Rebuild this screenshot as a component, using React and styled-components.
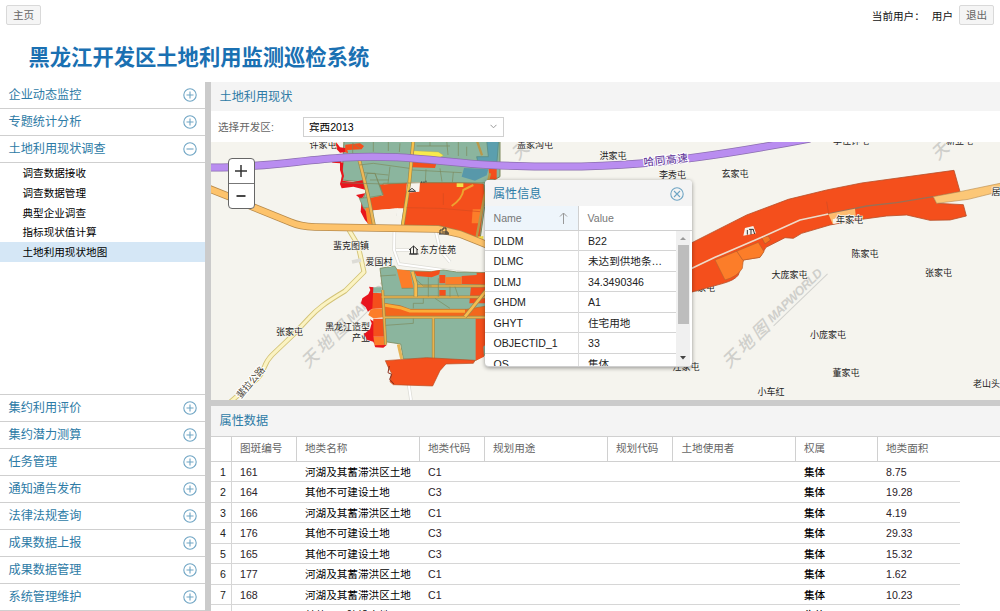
import React from "react";
import styled, { createGlobalStyle } from "styled-components";

const GlobalStyle = createGlobalStyle`
  * { box-sizing: border-box; }
  html, body { margin: 0; padding: 0; overflow: hidden; }
  body {
    background: #fff;
    color: #111;
    font-family: "Liberation Sans", "Noto Sans CJK SC", sans-serif;
    font-size: 10.6px;
  }
`;

const Page = styled.div`
  width: 1000px;
  height: 611px;
  display: flex;
  flex-direction: column;
  overflow: hidden;
`;
const TopBar = styled.div`
  height: 30px;
  flex: none;
  padding: 0 6px;
  display: flex;
  align-items: center;
  justify-content: space-between;
`;
const ToolButton = styled.button`
  width: 35px;
  height: 20px;
  padding: 0;
  border: 1px solid #d9d9d9;
  border-radius: 2px;
  background: #f5f5f5;
  color: #666;
  font: inherit;
  line-height: 18px;
`;
const UserArea = styled.div`
  display: flex;
  align-items: center;
  white-space: pre;
`;
const UserName = styled.span`
  margin: 0 6px 0 7px;
`;
const Title = styled.h1`
  flex: none;
  height: 52px;
  margin: 0;
  padding: 0 0 0 28.5px;
  color: #1a70b2;
  font-size: 21.3px;
  font-weight: 700;
  line-height: 57px;
`;
const Body = styled.div`
  flex: 1;
  min-height: 0;
  display: flex;
`;
const Sidebar = styled.nav`
  width: 205px;
  flex: none;
  display: flex;
  flex-direction: column;
`;
const Section = styled.div`
  height: 27px;
  flex: none;
  padding: 0 8px 0 8.5px;
  border-bottom: 1px solid #cfcfcf;
  display: flex;
  align-items: center;
  justify-content: space-between;
  color: #2d7ba6;
  font-size: 12.15px;
  line-height: 18px;
`;
const CircleIcon = styled.svg`
  width: 14px;
  height: 14px;
  display: block;
  fill: none;
  stroke: #6fa5c4;
  stroke-width: 1.1;
`;
const Menu = styled.div`
  height: 232px;
  flex: none;
  border-bottom: 1px solid #cfcfcf;
`;
const MenuItem = styled.div`
  height: 19.8px;
  padding-left: 22.5px;
  line-height: 20.5px;
  color: #000;
  background: ${(p) => (p.$active ? "#d5e7f6" : "transparent")};
`;
const Splitter = styled.div`
  flex: none;
  background: #cbcbcb;
  ${(p) => (p.$vertical ? "width: 6px;" : "height: 6px;")}
`;
const Content = styled.main`
  flex: 1;
  min-width: 0;
  display: flex;
  flex-direction: column;
`;
const PanelTitle = styled.div`
  height: ${(p) => p.$h}px;
  flex: none;
  padding-left: 8.5px;
  background: #f4f4f4;
  color: #2d7ba6;
  font-size: 12.15px;
  line-height: ${(p) => p.$h + 1}px;
`;
const FilterBar = styled.div`
  height: 31px;
  flex: none;
  padding-left: 7px;
  display: flex;
  align-items: center;
`;
const FilterLabel = styled.label`
  width: 85px;
  color: #666;
`;
const Select = styled.div`
  width: 201px;
  height: 20px;
  padding: 0 6px 0 5px;
  border: 1px solid #d0d0d0;
  display: flex;
  align-items: center;
  justify-content: space-between;
  color: #000;
`;
const MapArea = styled.section`
  position: relative;
  height: 258px;
  flex: none;
  overflow: hidden;
  background: #f5f4ee;
`;
const MapSvg = styled.svg`
  display: block;
  width: 789px;
  height: 258px;
`;
const ZoomControl = styled.div`
  position: absolute;
  left: 16.5px;
  top: 16px;
  width: 27px;
  height: 51px;
  border: 1px solid #666;
  border-radius: 4px;
  background: #fff;
  display: flex;
  flex-direction: column;
`;
const ZoomButton = styled.div`
  flex: 1;
  display: flex;
  align-items: center;
  justify-content: center;
  & + & { border-top: 1px solid #777; }
`;
const Popup = styled.div`
  position: absolute;
  left: 274px;
  top: 38px;
  width: 207px;
  height: 187px;
  border-radius: 4px;
  border-bottom: 1px solid #cfcfcf;
  background: #fff;
  box-shadow: 0 1px 4px rgba(0, 0, 0, 0.4);
  overflow: hidden;
  display: flex;
  flex-direction: column;
`;
const PopupTitle = styled.div`
  height: 26px;
  flex: none;
  padding: 1px 8.5px 0 8px;
  background: #f4f4f4;
  display: flex;
  align-items: center;
  justify-content: space-between;
  color: #2d7ba6;
  font-size: 12.1px;
  line-height: 18px;
`;
const PopupHead = styled.div`
  height: 25px;
  flex: none;
  display: grid;
  grid-template-columns: 94px 1fr;
  border-bottom: 1px solid #d0d0d0;
  color: #777;
  line-height: 24px;
`;
const PopupHeadCell = styled.div`
  padding: 0 10px 0 8.5px;
  display: flex;
  align-items: center;
  justify-content: space-between;
  background: ${(p) => (p.$sorted ? "#eef5fb" : "#fff")};
  border-right: ${(p) => (p.$sorted ? "1px solid #d0d0d0" : "0")};
`;
const PopupBody = styled.div`
  flex: 1;
  min-height: 0;
  display: flex;
  overflow: hidden;
`;
const PropertyList = styled.div`
  width: 191px;
`;
const PropertyRow = styled.div`
  height: 20.43px;
  display: grid;
  grid-template-columns: 94px 1fr;
  border-bottom: 1px solid #d4d4d4;
  line-height: 21px;
  color: #222;
`;
const PropertyCell = styled.div`
  padding-left: 8.5px;
  white-space: nowrap;
  & + & { border-left: 1px solid #dcdcdc; margin-left: -1px; padding-left: 9px; }
`;
const ScrollTrack = styled.div`
  width: 14px;
  background: #f0f0f0;
  display: flex;
  flex-direction: column;
  align-items: center;
  justify-content: space-between;
`;
const ScrollThumb = styled.div`
  width: 11px;
  height: 79px;
  margin-bottom: auto;
  background: #bdbdbd;
`;
const ScrollArrow = styled.svg`
  width: 14px;
  height: 14px;
  flex: none;
  display: block;
`;
const Table = styled.div`
  flex: 1;
  min-height: 0;
  overflow: hidden;
`;
const columns = "20.5px 65px 123px 65px 123px 65.5px 122.5px 82px 1fr";
const HeadRow = styled.div`
  height: 26px;
  display: grid;
  grid-template-columns: ${columns};
  border-top: 1px solid #d0d0d0;
  border-bottom: 1px solid #d0d0d0;
  color: #666;
  line-height: 23.5px;
`;
const HeadCell = styled.div`
  padding-left: 8.5px;
  border-right: ${(p) => (p.$last ? "0" : "1px solid #d0d0d0")};
`;
const DataRow = styled.div`
  width: 749px;
  height: 20.43px;
  display: grid;
  grid-template-columns: ${columns};
  border-bottom: 1px solid #d6d6d6;
  line-height: 20px;
  color: #222;
`;
const DataCell = styled.div`
  padding-left: 8.5px;
  white-space: nowrap;
  color: ${(p) => (p.$cjk ? "#000" : "#2b2229")};
  font-weight: ${(p) => (p.$strong ? 500 : 400)};
`;
const RowNumber = styled.div`
  padding-right: 4.5px;
  border-right: 1px solid #d6d6d6;
  text-align: right;
`;

function Toggle({ open, close }) {
  return (
    <CircleIcon viewBox="0 0 14 14">
      <circle cx="7" cy="7" r="6.2" />
      {close ? <path d="M4 4l6 6M10 4l-6 6" /> : <path d={open ? "M3.5 7h7" : "M3.5 7h7M7 3.5v7"} />}
    </CircleIcon>
  );
}

const sectionsTop = ["企业动态监控", "专题统计分析", "土地利用现状调查"];
const menu = ["调查数据接收", "调查数据管理", "典型企业调查", "指标现状值计算", "土地利用现状地图"];
const sectionsBottom = [
  "集约利用评价", "集约潜力测算", "任务管理", "通知通告发布",
  "法律法规查询", "成果数据上报", "成果数据管理", "系统管理维护",
];
const heads = ["", "图斑编号", "地类名称", "地类代码", "规划用途", "规划代码", "土地使用者", "权属", "地类面积"];
const river = "河湖及其蓄滞洪区土地";
const other = "其他不可建设土地";
const rows = [
  ["161", river, "C1", "8.75"],
  ["164", other, "C3", "19.28"],
  ["166", river, "C1", "4.19"],
  ["176", other, "C3", "29.33"],
  ["165", other, "C3", "15.32"],
  ["177", river, "C1", "1.62"],
  ["168", river, "C1", "10.23"],
  ["", other, "", ""],
];
const properties = [
  ["DLDM", "B22"], ["DLMC", "未达到供地条…"], ["DLMJ", "34.3490346"], ["GHDM", "A1"],
  ["GHYT", "住宅用地"], ["OBJECTID_1", "33"], ["QS", "集体"],
];

// Village labels: text, left edge, vertical centre
const places = [
  ["许家屯", 309.5, 145], ["盖家沟屯", 517, 144.5], ["洪家屯", 599.5, 155.5], ["李秀屯", 659, 174.5],
  ["玄家屯", 721.5, 174], ["李佳钟屯", 833, 140.5], ["新立屯", 946, 140.5], ["居", 991.5, 191.5],
  ["陈家屯", 851.5, 254], ["张家屯", 925, 273], ["大庞家屯", 771.5, 275], ["小庞家屯", 810, 334.5],
  ["董家屯", 832.5, 372.5], ["小车红", 757.5, 392], ["老山头", 973, 383.5], ["汪家屯", 672.5, 367],
  ["张家屯", 276, 332], ["蜚克图镇", 333, 246], ["爱国村", 365.5, 261.5], ["东方佳苑", 420, 249.5],
];

function Watermark({ x, y }) {
  return (
    <g transform={`translate(${x} ${y}) rotate(-44)`} fill="#cfcfcb">
      <text x="0" y="0" fontSize="17" fontFamily="Noto Sans CJK SC, sans-serif" fontStyle="italic" fontWeight="500" letterSpacing="3.5">天地图</text>
      <text x="63" y="-3" fontSize="12.5" fontWeight="700" fontStyle="italic" textLength="71">MAPWORLD</text>
      <path d="M62 0H137" stroke="#d2d2ce" strokeWidth="1" />
    </g>
  );
}

const GREEN = "#8bb59e";
const RED = "#f44f1c";
const CRIMSON = "#e8141c";
const ORANGE = "#fc7d29";
const ROAD = "#fdc36c";
const EDGE = "#7c8a5c";

function NorthDistrict() {
  return (
    <g transform="translate(320 140) scale(.33333)" strokeLinejoin="round">
      <path d="M72 0H540V110L495 135L494 200L480 300L440 290L250 250L265 130H190L165 255L145 250L125 185L140 150L118 125L66 120Z" fill={GREEN} stroke={EDGE} strokeWidth="3" />
      <path d="M500 0H536L530 78H476L470 50L505 50Z" fill="#5b9fae" stroke="#52867f" strokeWidth="2" />
      <path d="M432 84L505 88L500 106L465 122L425 110Z" fill="#5898aa" />
      <path d="M506 86H530V118H508Z" fill={RED} />
      <path d="M60 66L70 68L68 90L72 108L68 122L100 126L130 120L138 150L118 145L100 140L65 145L60 132L66 108L60 90Z" fill={CRIMSON} />
      <path d="M35 5L48 6L60 22L78 25L82 35L60 38L45 22H34ZM30 62L65 62L60 70L38 68Z" fill={CRIMSON} />
      <path d="M76 14L120 10L132 18L125 28L82 30L84 40L75 36Z" fill={RED} />
      <path d="M108 165L135 160L124 180L130 205L144 220L148 255L135 240L122 215L125 180Z" fill={CRIMSON} />
      <path d="M118 175L150 172L158 205L130 203Z" fill={GREEN} stroke={EDGE} strokeWidth="2" />
      <path d="M160 135L265 128V205L235 205L150 212L148 175L190 166Z" fill={RED} />
      <path d="M142 100L165 100L190 165L148 172L135 128Z" fill={GREEN} stroke={EDGE} strokeWidth="2" />
      <path d="M160 211L235 205L228 227L250 230V257H158Z" fill="#f5f3ec" />
      <path d="M266 128H410L490 132L493 165L477 303L410 270L360 257L245 255L262 135Z" fill={RED} stroke="#bd5721" strokeWidth="2" />
      <path d="M261 128L300 126L298 155L258 158Z" fill="#f7f4ee" />
      <path d="M136 205L154 200L164 252H143Z" fill="#fa8b2c" />
      <path d="M458 208H482L478 250H455Z" fill={ORANGE} />
      <path d="M278 32L355 36L370 46L358 54L280 50Z" fill="#f8ea4c" stroke="#b8a44b" />
      <path d="M278 65L350 68L345 84L276 82Z" fill={RED} />
      <path d="M410 130H430V141H410ZM470 290L490 288V306L465 301Z" fill="#f5df48" />
      <path d="M460 135L430 150Q428 175 395 198" fill="none" stroke="#eda32f" strokeWidth="6" />
      <path d="M280 0L268 128L248 255" fill="none" stroke="#9a8a4e" strokeWidth="11" />
      <path d="M280 0L268 128L248 255" fill="none" stroke="#f6c14b" strokeWidth="7" />
      <path d="M118 60L144 165L162 256" fill="none" stroke="#9a8a4e" strokeWidth="11" />
      <path d="M118 60L144 165L162 256" fill="none" stroke="#edb858" strokeWidth="7" />
      <path d="M470 0L486 46M510 100L492 175L468 300" fill="none" stroke="#b99849" strokeWidth="7" />
      <g fill="none" stroke={EDGE} strokeWidth="2">
        <path d="M98 40V10L120 25M160 5V35M205 0V33M240 10L238 36M290 18H390M330 0V18M380 0L384 45M415 5V48M440 20V48M118 75L160 70L268 85M210 80L204 130M165 100L188 165M132 98L205 105M66 128L190 132L300 128H500M150 120H207M276 90L425 98M318 88L316 126M360 85L366 125M400 96L397 128" />
      </g>
      <path d="M370 160V195M260 203L360 205L480 215" fill="none" stroke="#d44b20" strokeWidth="2" />
      <g stroke="#444" strokeWidth="3" fill="#f4f2ed">
        <path d="M265 154L276 145L287 154ZM270 154H283" />
        <path d="M305 129V124M312 129V124M318 127V122" />
      </g>
    </g>
  );
}

function SouthDistrict() {
  return (
    <g transform="translate(210 240) scale(.33333)" strokeLinejoin="round">
      <path d="M510 85L554 78L562 90L600 92L665 95L700 90L740 96L850 98V330L790 365L580 357L572 312L525 305L518 150Z" fill={GREEN} stroke={EDGE} strokeWidth="2.5" />
      <path d="M560 88L600 92L610 143L575 145Z" fill={ORANGE} />
      <path d="M612 94L660 95L690 90L688 103L665 112L620 108ZM688 105H706V130H688ZM755 108L800 105V98H830V135L755 132ZM688 150H707V168H688ZM783 138H840V190H778Z" fill={RED} />
      <path d="M706 112L755 110V134H706Z" fill={ORANGE} />
      <path d="M485 158L518 160L522 205L470 208L482 190Z" fill={RED} />
      <path d="M482 208L522 205L524 232L490 235L475 225ZM488 290H525L528 315L495 320Z" fill={ORANGE} />
      <path d="M490 236L525 236V290H486Z" fill={RED} />
      <path d="M487 142H515V158H485Z" fill={GREEN} />
      <path d="M477 140L490 142L487 205L474 215L467 202L453 190L457 175L475 163L481 150Z" fill={CRIMSON} />
      <path d="M480 238L490 244V288L494 316L530 315L520 323L496 322L490 305L472 300L462 282L480 268L485 250Z" fill={CRIMSON} />
      <path d="M522 190L570 197L600 208L770 208L830 198V230L525 232Z" fill="#f3671d" stroke="#b66e29" strokeWidth="2" />
      <path d="M522 195L570 203L600 213L765 214" fill="none" stroke="#faad39" strokeWidth="9" />
      <path d="M515 171H830M522 232H830M620 138H830M670 235V360M518 150L522 225L527 314" fill="none" stroke="#9b8a4d" strokeWidth="9" />
      <path d="M515 171H830M522 232H830M620 138H830M670 235V360M518 150L522 225L527 314" fill="none" stroke="#eab24c" strokeWidth="5" />
      <path d="M607 95L617 130V170M830 150L765 230" fill="none" stroke="#a18747" strokeWidth="12" />
      <path d="M607 95L617 130V170M830 150L765 230" fill="none" stroke="#f7bd50" strokeWidth="8" />
      <path d="M797 236H840V300L820 320L822 350L797 362Z" fill={RED} />
      <path d="M526 362L650 353L795 361L790 370L708 372L690 392L668 438L550 434L540 425L545 400L534 380Z" fill={RED} stroke="#b64e24" strokeWidth="2" />
      <path d="M538 378L534 398L545 403L539 418L552 432" fill="none" stroke="#8b2d1b" strokeWidth="3" />
      <path d="M565 313L575 357" stroke="#e6b456" strokeWidth="9" />
      <g fill="none" stroke={EDGE} strokeWidth="2">
        <path d="M510 108L558 105M575 145H610M655 112V170M620 120L640 138M685 115V170M640 138H665M720 140V170M735 140L745 170M610 205V190H640V175M675 175L720 205M527 256L610 250V236" />
      </g>
    </g>
  );
}

function EastCorridor() {
  return (
    <g transform="translate(680 140) scale(.33333)" strokeLinejoin="round">
      <path d="M-10 330L36 308L200 225L325 178L440 150L545 129L822 91L840 155L760 170L770 190L850 194L859 228L810 240L750 241L680 225L620 228L530 240L450 255L365 280L340 295L315 293L258 322L240 352L190 360L175 405Q165 420 130 430L36 456L-10 470Z" fill={RED} stroke="#b8502a" strokeWidth="2.5" />
      <path d="M105 360L235 307L252 335L240 352L190 360L187 385Q172 410 135 420Z" fill={ORANGE} stroke="#b8622d" strokeWidth="2" />
      <path d="M170 333L188 360M245 293L265 288L272 300L255 312Z" fill="#f47725" stroke="#ae592e" strokeWidth="2" />
      <path d="M-5 404L105 352L245 292L360 240L445 222L560 198L650 188L760 170" fill="none" stroke="#9b6f55" strokeWidth="4" />
      <path d="M-5 404L105 352L245 292L360 240L445 222" fill="none" stroke="#f6d9c5" strokeWidth="5" />
      <path d="M445 222L525 206L528 235L458 252Z" fill="#fdbc70" />
      <path d="M458 238L500 228L522 225V240L460 252Z" fill="#f6f3ed" />
      <path d="M195 264L220 258L228 280L190 287Z" fill="#f6f3ed" />
      <path d="M202 270V284M207 268H220M213 268V284M219 267L224 282" stroke="#333" strokeWidth="3" />
      <path d="M760 170L840 155L970 128V152L865 178L770 190Z" fill="#fcc777" stroke="#bd9154" strokeWidth="2" />
      <path d="M440 185L446 222" stroke="#ca4c26" strokeWidth="2" />
    </g>
  );
}

function LandMap() {
  return (
    <MapSvg viewBox="211 142 789 258">
      <rect x="211" y="142" width="789" height="258" fill="#f5f4ee" />
      <Watermark x={308} y={369} />
      <Watermark x={729} y={369} />
      <Watermark x={518} y={161} />
      <Watermark x={938} y={161} />
      <g fill="none" strokeLinejoin="round">
        <path d="M349 230L358 245L364 272L345 291C325 303 317 309 309 318L293 335L272 355C262 365 266 370 258 378L228 404" stroke="#d2c277" strokeWidth="5" />
        <path d="M349 230L358 245L364 272L345 291C325 303 317 309 309 318L293 335L272 355C262 365 266 370 258 378L228 404" stroke="#fbf3c2" strokeWidth="3.2" />
        <path d="M395 205L394 250L399 264L480 275M396 250H410M436 232L440 250L450 262M408 380L411 400M382 205V225M352 262L361 260" stroke="#dddcd6" strokeWidth="3.5" />
        <path d="M395 205L394 250L399 264L480 275M396 250H410M436 232L440 250L450 262M408 380L411 400M382 205V225" stroke="#fff" strokeWidth="2" />
      </g>
      <g fontFamily="Noto Sans CJK SC, sans-serif" fontSize="9" fill="#222">
        <text x="325" y="329.8">黑龙江造型</text>
        <text x="352" y="340.8">产业</text>
        <text x="688" y="290.5">宋家屯</text>
      </g>
      <NorthDistrict />
      <SouthDistrict />
      <EastCorridor />
      <g fill="none">
        <path d="M205 187L230 197L253 207L290 222Q300 226.500 315 227L438 229L460 234L490 246" stroke="#b78a4b" strokeWidth="7.500" />
        <path d="M205 187L230 197L253 207L290 222Q300 226.500 315 227L438 229L460 234L490 246" stroke={ROAD} strokeWidth="6" />
        <path d="M205 167.500C260 168.500 300 160 345 157.500C400 154 440 162 490 165C560 168 600 167 640 163.500C690 159.500 750 150 810 138.500" stroke="#8b6eaf" strokeWidth="8" />
        <path d="M205 167.500C260 168.500 300 160 345 157.500C400 154 440 162 490 165C560 168 600 167 640 163.500C690 159.500 750 150 810 138.500" stroke="#b98df0" strokeWidth="6.500" />
      </g>
      <g fontFamily="Noto Sans CJK SC, sans-serif" fontSize="9" fill="#222" stroke="#f5f4ee" strokeWidth="1.500" paintOrder="stroke">
        {places.map(([name, x, y]) => (
          <text key={name + x} x={x} y={y + 3.3}>{name}</text>
        ))}
        <text x="836" y="222.500">年家屯</text>
      </g>
      <g fontFamily="Noto Sans CJK SC, sans-serif" stroke="#fff" strokeWidth="2" paintOrder="stroke">
        <text transform="translate(644 166) rotate(-6)" fontSize="10.500" fontWeight="500" fill="#6a3fa0" letterSpacing="0.800">哈同高速</text>
        <text transform="translate(241 399) rotate(-50)" fontSize="9.500" fill="#4a4433">蜚拉公路</text>
      </g>
      <g fill="none" stroke="#333" strokeWidth="1">
        <path d="M409 250L413.500 246L418 250M410.500 249V254H417V249M413.500 246V254M409 254H418.500" />
        <path d="M440 234V230H443V228H446V234M441.500 232H448V234M439 234H449" />
      </g>
    </MapSvg>
  );
}

export default function App() {
  return (
    <Page>
      <GlobalStyle />
      <TopBar>
        <ToolButton>主页</ToolButton>
        <UserArea>
          <span>当前用户：</span>
          <UserName>用户</UserName>
          <ToolButton>退出</ToolButton>
        </UserArea>
      </TopBar>
      <Title>黑龙江开发区土地利用监测巡检系统</Title>
      <Body>
        <Sidebar>
          {sectionsTop.map((s, i) => (
            <Section key={s}>{s}<Toggle open={i === 2} /></Section>
          ))}
          <Menu>
            {menu.map((m, i) => <MenuItem key={m} $active={i === 4}>{m}</MenuItem>)}
          </Menu>
          {sectionsBottom.map((s) => <Section key={s}>{s}<Toggle /></Section>)}
        </Sidebar>
        <Splitter $vertical />
        <Content>
          <PanelTitle $h={29}>土地利用现状</PanelTitle>
          <FilterBar>
            <FilterLabel>选择开发区:</FilterLabel>
            <Select>
              宾西2013
              <svg width="7" height="5" viewBox="0 0 7 5" fill="none" stroke="#999"><path d="M.5 .8l3 3 3-3" /></svg>
            </Select>
          </FilterBar>
          <MapArea>
            <LandMap />
            <ZoomControl>
              <ZoomButton><svg width="12" height="12" stroke="#333" strokeWidth="1.500"><path d="M0 6h12M6 0v12" /></svg></ZoomButton>
              <ZoomButton><svg width="12" height="12" stroke="#333" strokeWidth="1.800"><path d="M1.500 6h9" /></svg></ZoomButton>
            </ZoomControl>
            <Popup>
              <PopupTitle>属性信息<Toggle close /></PopupTitle>
              <PopupHead>
                <PopupHeadCell $sorted>
                  Name
                  <svg width="9" height="12" viewBox="0 0 9 12" fill="none" stroke="#999"><path d="M4.500 12V1M1 4.500L4.500 1 8 4.500" /></svg>
                </PopupHeadCell>
                <PopupHeadCell>Value</PopupHeadCell>
              </PopupHead>
              <PopupBody>
                <PropertyList>
                  {properties.map(([k, v]) => (
                    <PropertyRow key={k}><PropertyCell>{k}</PropertyCell><PropertyCell>{v}</PropertyCell></PropertyRow>
                  ))}
                </PropertyList>
                <ScrollTrack>
                  <ScrollArrow viewBox="0 0 14 14"><path d="M4 9l3-3 3 3z" fill="#999" /></ScrollArrow>
                  <ScrollThumb />
                  <ScrollArrow viewBox="0 0 14 14"><path d="M4 4h6L7 7.500z" fill="#444" /></ScrollArrow>
                </ScrollTrack>
              </PopupBody>
            </Popup>
          </MapArea>
          <Splitter />
          <PanelTitle $h={30}>属性数据</PanelTitle>
          <Table>
            <HeadRow>
              {heads.map((h, i) => <HeadCell key={i} $last={i === 8}>{h}</HeadCell>)}
            </HeadRow>
            {rows.map(([id, name, code, area], i) => (
              <DataRow key={i}>
                <RowNumber>{id && i + 1}</RowNumber>
                <DataCell>{id}</DataCell>
                <DataCell $cjk>{name}</DataCell>
                <DataCell>{code}</DataCell>
                <DataCell />
                <DataCell />
                <DataCell />
                <DataCell $cjk $strong>集体</DataCell>
                <DataCell>{area}</DataCell>
              </DataRow>
            ))}
          </Table>
        </Content>
      </Body>
    </Page>
  );
}
